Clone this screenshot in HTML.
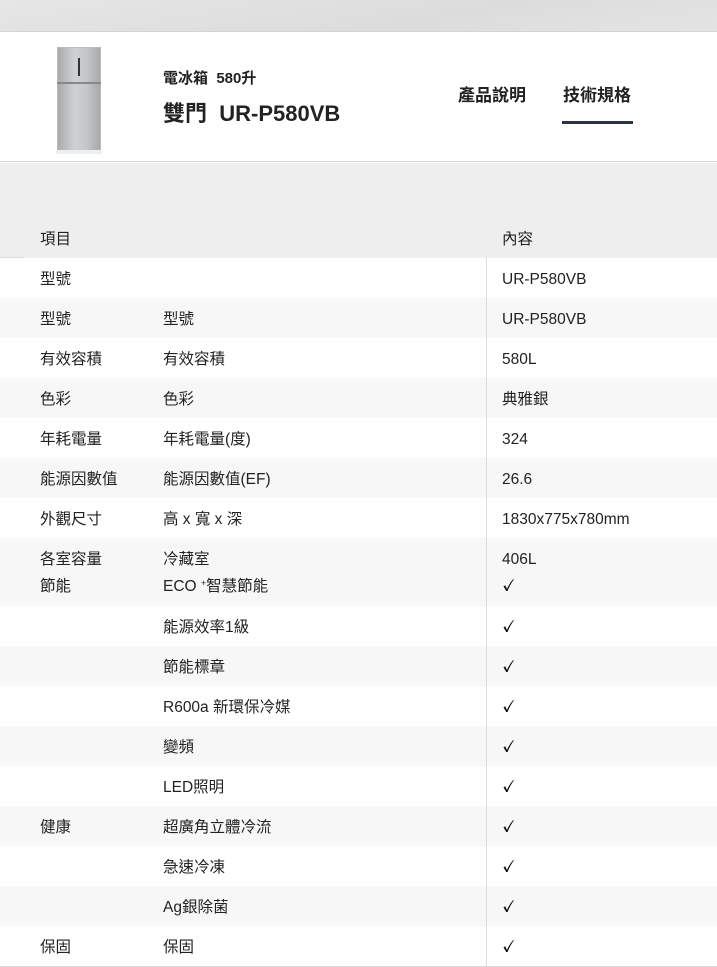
<!DOCTYPE html>
<html><head><meta charset="utf-8"><style>
*{margin:0;padding:0;box-sizing:border-box}
body{width:717px;height:967px;overflow:hidden;background:#fff;font-family:"Liberation Sans","Noto Sans CJK TC",sans-serif;color:#222;position:relative}
.top{position:absolute;left:0;top:0;width:717px;height:32px;background:linear-gradient(170deg,#e6e6e6,#dcdcdc 60%,#e4e4e4);border-bottom:1px solid #d4d4d4}
.hdr{position:absolute;left:0;top:32px;width:717px;height:130px;background:#fff;border-bottom:1px solid #d8d8d8}
.gray{position:absolute;left:0;top:163px;width:717px;height:95px;background:#eeeeee}
.t{position:absolute;font-size:15.5px;line-height:20px;white-space:nowrap;margin-top:2px}
.c{position:absolute;left:502px;width:12px;height:14px}
.row{position:absolute;left:0;width:717px}
.vl{position:absolute;left:486px;top:258px;width:1px;height:708px;background:#dcdcdc}
.sp{position:relative;top:-5px;font-size:9px}
</style></head><body>
<div class="top"></div>
<div class="hdr">
 <div style="position:absolute;left:57px;top:15px;width:44px;height:105px;background:linear-gradient(90deg,#a9abae,#cfd1d3 40%,#c3c5c8 70%,#a6a8ab);border:1px solid #bbb"></div>
 <div style="position:absolute;left:57px;top:50px;width:44px;height:2px;background:#888"></div>
 <div style="position:absolute;top:26px;width:2px;height:18px;background:#333;left:78px"></div>
 <div style="position:absolute;left:56px;top:118px;width:46px;height:4px;background:#eee"></div>
 <div class="t" style="left:163px;top:35px;font-size:15px;font-weight:bold">電冰箱&nbsp; 580升</div>
 <div class="t" style="left:163px;top:66px;font-size:22px;line-height:28px;font-weight:bold">雙門&nbsp; UR-P580VB</div>
 <div class="t" style="left:458px;top:50px;font-size:17px;line-height:24px;font-weight:bold">產品說明</div>
 <div class="t" style="left:563px;top:50px;font-size:17px;line-height:24px;font-weight:bold">技術規格</div>
 <div style="position:absolute;left:562px;top:89px;width:71px;height:3px;background:#2a3445"></div>
</div>
<div class="gray"></div>
<div class="t" style="left:40px;top:228px">項目</div>
<div class="t" style="left:502px;top:228px">內容</div>
<div class="row" style="top:258px;height:40px;background:#fff"></div>
<div class="row" style="top:298px;height:40px;background:#f7f7f7"></div>
<div class="row" style="top:378px;height:40px;background:#f7f7f7"></div>
<div class="row" style="top:458px;height:40px;background:#f7f7f7"></div>
<div class="row" style="top:538px;height:68px;background:#f7f7f7"></div>
<div class="row" style="top:646px;height:40px;background:#f7f7f7"></div>
<div class="row" style="top:726px;height:40px;background:#f7f7f7"></div>
<div class="row" style="top:806px;height:40px;background:#f7f7f7"></div>
<div class="row" style="top:886px;height:40px;background:#f7f7f7"></div>
<div class="row" style="top:966px;height:1px;background:#d8d8d8"></div>
<div style="position:absolute;left:0;top:257px;width:24px;height:1px;background:#ddd"></div>
<div class="vl"></div>

<svg width="0" height="0" style="position:absolute"><defs><symbol id="ck" viewBox="0 0 12 14"><path d="M1.5 8.2 L3.3 7.4 L5 11 Q7.5 5 11.2 1 L11.8 1.6 Q8.3 6 5.6 13 L4.2 13 Z" fill="#111"/></symbol></defs></svg>

<div class="t" style="left:40px;top:268px">型號</div><div class="t" style="left:502px;top:268px">UR-P580VB</div>
<div class="t" style="left:40px;top:308px">型號</div><div class="t" style="left:163px;top:308px">型號</div><div class="t" style="left:502px;top:308px">UR-P580VB</div>
<div class="t" style="left:40px;top:348px">有效容積</div><div class="t" style="left:163px;top:348px">有效容積</div><div class="t" style="left:502px;top:348px">580L</div>
<div class="t" style="left:40px;top:388px">色彩</div><div class="t" style="left:163px;top:388px">色彩</div><div class="t" style="left:502px;top:388px">典雅銀</div>
<div class="t" style="left:40px;top:428px">年耗電量</div><div class="t" style="left:163px;top:428px">年耗電量(度)</div><div class="t" style="left:502px;top:428px">324</div>
<div class="t" style="left:40px;top:468px">能源因數值</div><div class="t" style="left:163px;top:468px">能源因數值(EF)</div><div class="t" style="left:502px;top:468px">26.6</div>
<div class="t" style="left:40px;top:508px">外觀尺寸</div><div class="t" style="left:163px;top:508px">高 x 寬 x 深</div><div class="t" style="left:502px;top:508px">1830x775x780mm</div>
<div class="t" style="left:40px;top:548px">各室容量</div><div class="t" style="left:163px;top:548px">冷藏室</div><div class="t" style="left:502px;top:548px">406L</div>
<div class="t" style="left:40px;top:575px">節能</div><div class="t" style="left:163px;top:575px">ECO <span class="sp">+</span>智慧節能</div><svg class="c" style="top:578px"><use href="#ck"/></svg>
<div class="t" style="left:163px;top:616px">能源效率1級</div><svg class="c" style="top:619px"><use href="#ck"/></svg>
<div class="t" style="left:163px;top:656px">節能標章</div><svg class="c" style="top:659px"><use href="#ck"/></svg>
<div class="t" style="left:163px;top:696px">R600a 新環保冷媒</div><svg class="c" style="top:699px"><use href="#ck"/></svg>
<div class="t" style="left:163px;top:736px">變頻</div><svg class="c" style="top:739px"><use href="#ck"/></svg>
<div class="t" style="left:163px;top:776px">LED照明</div><svg class="c" style="top:779px"><use href="#ck"/></svg>
<div class="t" style="left:40px;top:816px">健康</div><div class="t" style="left:163px;top:816px">超廣角立體冷流</div><svg class="c" style="top:819px"><use href="#ck"/></svg>
<div class="t" style="left:163px;top:856px">急速冷凍</div><svg class="c" style="top:859px"><use href="#ck"/></svg>
<div class="t" style="left:163px;top:896px">Ag銀除菌</div><svg class="c" style="top:899px"><use href="#ck"/></svg>
<div class="t" style="left:40px;top:936px">保固</div><div class="t" style="left:163px;top:936px">保固</div><svg class="c" style="top:939px"><use href="#ck"/></svg>
</body></html>
